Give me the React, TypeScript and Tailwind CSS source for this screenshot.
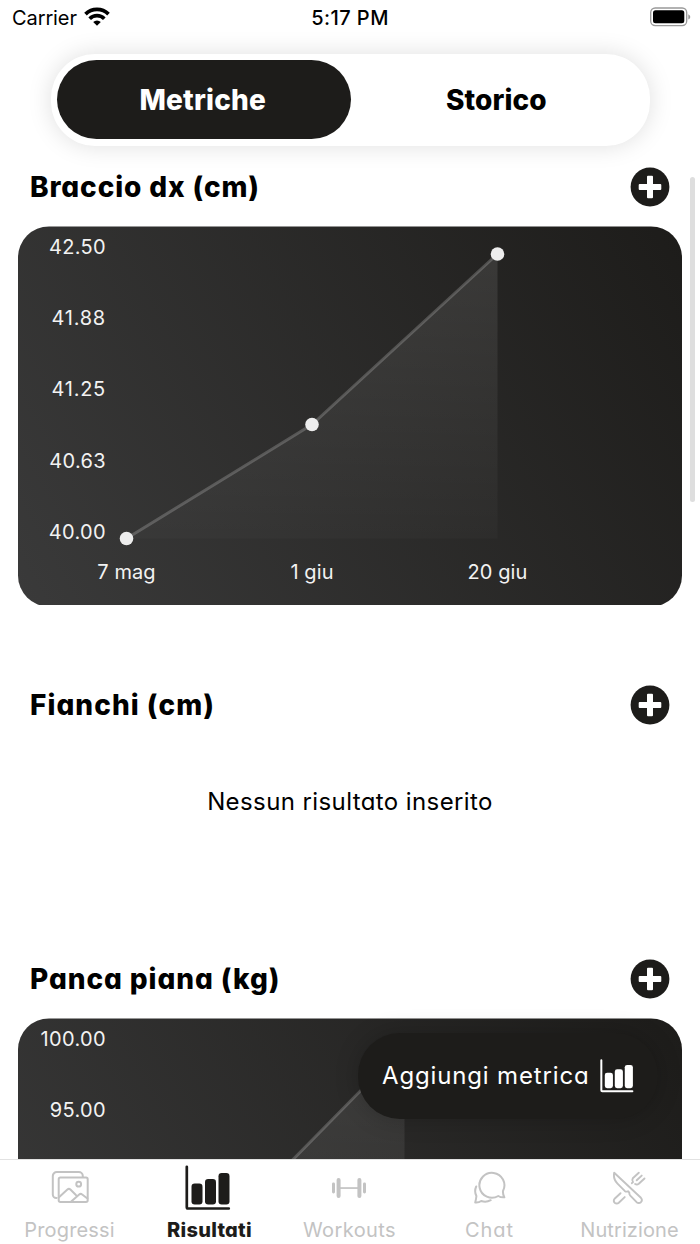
import React from "react";

const POP = "font-['Inter',sans-serif] [font-feature-settings:'cv11']";

function PlusButton() {
  return (
    <button aria-label="Aggiungi" className="size-10">
      <svg viewBox="0 0 40 40" className="size-10">
        <circle cx="20" cy="20" r="19.4" fill="#1d1c1a" />
        <path
          d="M18 8.7h4a1 1 0 0 1 1 1V17h7.3a1 1 0 0 1 1 1v4a1 1 0 0 1-1 1H23v7.3a1 1 0 0 1-1 1h-4a1 1 0 0 1-1-1V23H9.700a1 1 0 0 1-1-1v-4a1 1 0 0 1 1-1H17V9.700a1 1 0 0 1 1-1z"
          fill="#fff"
        />
      </svg>
    </button>
  );
}

function SectionHeader({ title, tracking }: { title: string; tracking: string }) {
  return (
    <div className="flex h-10 items-center justify-between pl-[30px] pr-[30px]">
      <h2 className={`${POP} ${tracking} pb-px text-[28px] leading-[38px] font-extrabold whitespace-nowrap text-black`}>{title}</h2>
      <PlusButton />
    </div>
  );
}

type Point = [number, number];

function Chart({ id, yLabels, xLabels, points }: { id: string; yLabels: string[]; xLabels: [number, string][]; points: Point[] }) {
  const line = points.map((p) => p.join(",")).join(" ");
  const lastX = points[points.length - 1][0];
  return (
    <div className="mx-[18px] mt-[19px] h-[379px] overflow-hidden">
      <svg width="664" height="381" viewBox="0 -0.5 664 381" className="font-['Inter',sans-serif]">
        <defs>
          <linearGradient id={`${id}-bg`} gradientUnits="userSpaceOnUse" x1="0" y1="380" x2="664" y2="0">
            <stop offset="0" stopColor="#3a3a3a" />
            <stop offset="1" stopColor="#1d1c1a" />
          </linearGradient>
          <linearGradient id={`${id}-area`} gradientUnits="userSpaceOnUse" x1="0" y1="27" x2="0" y2="380">
            <stop offset="0" stopColor="#fff" stopOpacity="0.1" />
            <stop offset="1" stopColor="#fff" stopOpacity="0" />
          </linearGradient>
        </defs>
        <rect width="664" height="380" rx="31" fill={`url(#${id}-bg)`} />
        <polygon points={`${line} ${lastX},312 108.5,312`} fill={`url(#${id}-area)`} />
        <polyline points={line} fill="none" stroke="#fff" strokeOpacity="0.2" strokeWidth="3" />
        {points.map(([x, y]) => (
          <circle key={x} cx={x} cy={y} r="6.8" fill="#ededed" />
        ))}
        {yLabels.map((label, i) => (
          <text key={label} x="88" y={27.400 + i * 71.250} textAnchor="end" fontSize="20" letterSpacing={label.startsWith("41") ? 0.75 : 0.35} fill="#f2f2f2">
            {label}
          </text>
        ))}
        {xLabels.map(([x, label]) => (
          <text key={label} x={x} y="352.500" textAnchor="middle" fontSize="20" letterSpacing="0.1" fill="#f2f2f2">
            {label}
          </text>
        ))}
      </svg>
    </div>
  );
}

function BarsIcon({ className }: { className: string }) {
  return (
    <svg viewBox="0 0 46 46" className={className} fill="currentColor">
      <path d="M1.800 1.800v40.500q0 1.200 1.200 1.200h40.800" fill="none" stroke="currentColor" strokeWidth="2.700" strokeLinecap="round" />
      <rect x="6.500" y="18.500" width="11" height="21" rx="3.200" />
      <rect x="20" y="14" width="11" height="25.500" rx="3.200" />
      <rect x="33.500" y="8" width="11" height="31.500" rx="3.200" />
    </svg>
  );
}

function PhotosIcon() {
  return (
    <svg viewBox="0 0 40 36" className="h-9 w-10" fill="none" stroke="currentColor" strokeWidth="2" strokeLinejoin="round" strokeLinecap="round">
      <path d="M6.500 28H6.300a3.500 3.500 0 0 1-3.500-3.500V6a4 4 0 0 1 4-4h22a4 4 0 0 1 4 4v1" />
      <rect x="8.700" y="7.500" width="29" height="24.500" rx="1.700" />
      <path d="M8.700 27.500l8.700-8q1.500-1.300 3 0l5.500 5.500M21.200 31.500l8-7q1.500-1.300 3 0l5.200 4" />
      <circle cx="28.700" cy="14.200" r="2.400" />
    </svg>
  );
}

function DumbbellIcon() {
  return (
    <svg viewBox="0 0 36 24" className="mr-0.5 h-6 w-9" fill="currentColor">
      <rect x="1" y="6.500" width="3" height="11" rx="1.400" />
      <rect x="5.600" y="2" width="4" height="20" rx="1.900" />
      <rect x="9" y="11.200" width="18" height="1.700" />
      <rect x="26.400" y="2" width="4" height="20" rx="1.900" />
      <rect x="32" y="6.500" width="3" height="11" rx="1.400" />
    </svg>
  );
}

function ChatIcon() {
  return (
    <svg viewBox="0 0 34 34" className="size-[34px]" fill="none" stroke="currentColor" strokeWidth="2" strokeLinejoin="round" strokeLinecap="round">
      <path d="M30 20q-.3 3.500 1.300 6.300-3.500.3-6-1.300A12.500 12.500 0 1 1 30 20z" />
      <path d="M3.200 15.500q-2.200 5 .2 9.500-.3 3.500-1.200 6.500 3.800.3 6-1.500 5 1.800 9.500-.8" />
    </svg>
  );
}

function CutleryIcon() {
  return (
    <svg viewBox="0 0 34 34" className="mr-0.5 size-[34px]" fill="none" stroke="currentColor" strokeWidth="1.900" strokeLinejoin="round" strokeLinecap="round">
      <path d="M2.200 1.700Q.9 8 5.500 12.600l7.200 7.300q1.700 1.300 3.300.3l1.300 1.500q-.1 1.800 1 3l6.300 6.500q2.200 1.800 4.300 0 2-2.200 0-4.400z" />
      <path d="M8.500 22.200l-5.900 5.600q-1.600 2.200 0 3.900 2.200 1.700 4.200.1l5.900-5.700" />
      <path d="M26.800 1.700l-6 5.500q-1.200 2 .2 3.800l-1.100 1.200M32.500 7.500l-5.700 5.300q-1.900 1.300-3.700.2M29.700 4.600l-5 4.700" />
    </svg>
  );
}

function Tab({ label, icon, active, tracking }: { label: string; icon: React.ReactNode; active?: boolean; tracking: string }) {
  return (
    <a className={`flex w-[140px] flex-col items-center pr-px ${active ? "font-extrabold text-[#1d1c1a]" : "text-[#c3c3c3]"}`}>
      <span className="flex h-14 items-center justify-center">{icon}</span>
      <span className={`${POP} ${tracking} text-[20px] leading-[28px] whitespace-nowrap`}>{label}</span>
    </a>
  );
}

export default function App() {
  return (
    <div className="relative flex h-[1244px] w-[700px] flex-col overflow-hidden bg-white">
      <main className="relative h-[1159px] shrink-0 overflow-hidden">
        <header className="grid h-9 grid-cols-3 items-center pl-3 pr-[9px] font-['Inter',sans-serif] text-[20px] leading-9 text-black">
          <div className="flex items-center gap-[7px]">
            <span className="tracking-[-0.1px]">Carrier</span>
            <svg viewBox="0 0 26 19" className="mb-[3px] h-[19px] w-[26px]" fill="none" stroke="#000" strokeWidth="3.700">
              <path d="M1.500 7.100a16.300 16.300 0 0 1 23 0" />
              <path d="M5.700 11.700a10.300 10.300 0 0 1 14.600 0" />
              <path d="M13 18.800l-3.800-3.700a5.400 5.400 0 0 1 7.600 0z" fill="#000" stroke="none" />
            </svg>
          </div>
          <div className="pr-[3px] text-center font-medium tracking-[0.45px]">5:17 PM</div>
          <div className="flex justify-end">
            <svg viewBox="0 0 41 20" className="mb-0.5 h-5 w-[41px]">
              <rect x="0.700" y="1" width="36" height="17.600" rx="4.500" fill="none" stroke="#999" strokeWidth="1.300" />
              <rect x="3" y="3.300" width="31.300" height="13" rx="2.500" fill="#000" />
              <path d="M38.300 7.200q2 1 2 2.700t-2 2.700z" fill="#999" />
            </svg>
          </div>
        </header>

        <div className={`${POP} mt-[18px] ml-[51px] flex h-[91.5px] w-[599px] rounded-[44px] bg-white p-1.5 text-[28px] font-extrabold shadow-[0_0_24px_rgba(0,0,0,0.13)]`}>
          <button className="h-[79px] w-[293.5px] rounded-[40px] bg-[#1d1c1a] pr-0.5 tracking-[0.2px] text-white">Metriche</button>
          <button className="h-[79px] flex-1 pr-0.5 tracking-[0.1px] text-black">Storico</button>
        </div>

        <section className="mt-[21.5px]">
          <SectionHeader title="Braccio dx (cm)" tracking="tracking-[0.88px]" />
          <Chart
            id="arm"
            yLabels={["42.50", "41.88", "41.25", "40.63", "40.00"]}
            xLabels={[[108.5, "7 mag"], [294, "1 giu"], [479.5, "20 giu"]]}
            points={[[108.5, 312], [294, 198], [479.5, 27.500]]}
          />
        </section>

        <section className="mt-20">
          <SectionHeader title="Fianchi (cm)" tracking="tracking-[1.05px]" />
          <p className={`${POP} mt-[61px] h-8 text-center text-[24px] leading-8 tracking-[0.4px] text-black`}>Nessun risultato inserito</p>
        </section>

        <section className="mt-[141px]">
          <SectionHeader title="Panca piana (kg)" tracking="tracking-[0.92px]" />
          <Chart
            id="bench"
            yLabels={["100.00", "95.00"]}
            xLabels={[]}
            points={[[108.5, 312], [247.5, 169], [386.5, 27.500]]}
          />
        </section>

        <div className="absolute top-[177px] right-[5px] h-[325px] w-[5px] rounded-full bg-[#dedede]" />

        <button className={`${POP} absolute top-[1032.5px] left-[358px] flex h-[86.5px] w-[300px] items-center rounded-[42px] bg-[#1d1c1a] pl-6 text-[24px] tracking-[0.85px] text-white shadow-[0_0_24px_rgba(0,0,0,0.2)]`}>
          <span className="w-[217.5px] text-left whitespace-nowrap">Aggiungi metrica</span>
          <BarsIcon className="size-[34px]" />
        </button>
      </main>

      <nav className="flex h-[85px] shrink-0 border-t border-[#e2e2e2] bg-white">
        <Tab label="Progressi" icon={<PhotosIcon />} tracking="tracking-[0.15px]" />
        <Tab label="Risultati" icon={<BarsIcon className="mr-[3px] size-[46px]" />} active tracking="tracking-[0.25px]" />
        <Tab label="Workouts" icon={<DumbbellIcon />} tracking="tracking-[0.4px]" />
        <Tab label="Chat" icon={<ChatIcon />} tracking="tracking-[1px]" />
        <Tab label="Nutrizione" icon={<CutleryIcon />} tracking="tracking-[0.1px]" />
      </nav>
    </div>
  );
}
